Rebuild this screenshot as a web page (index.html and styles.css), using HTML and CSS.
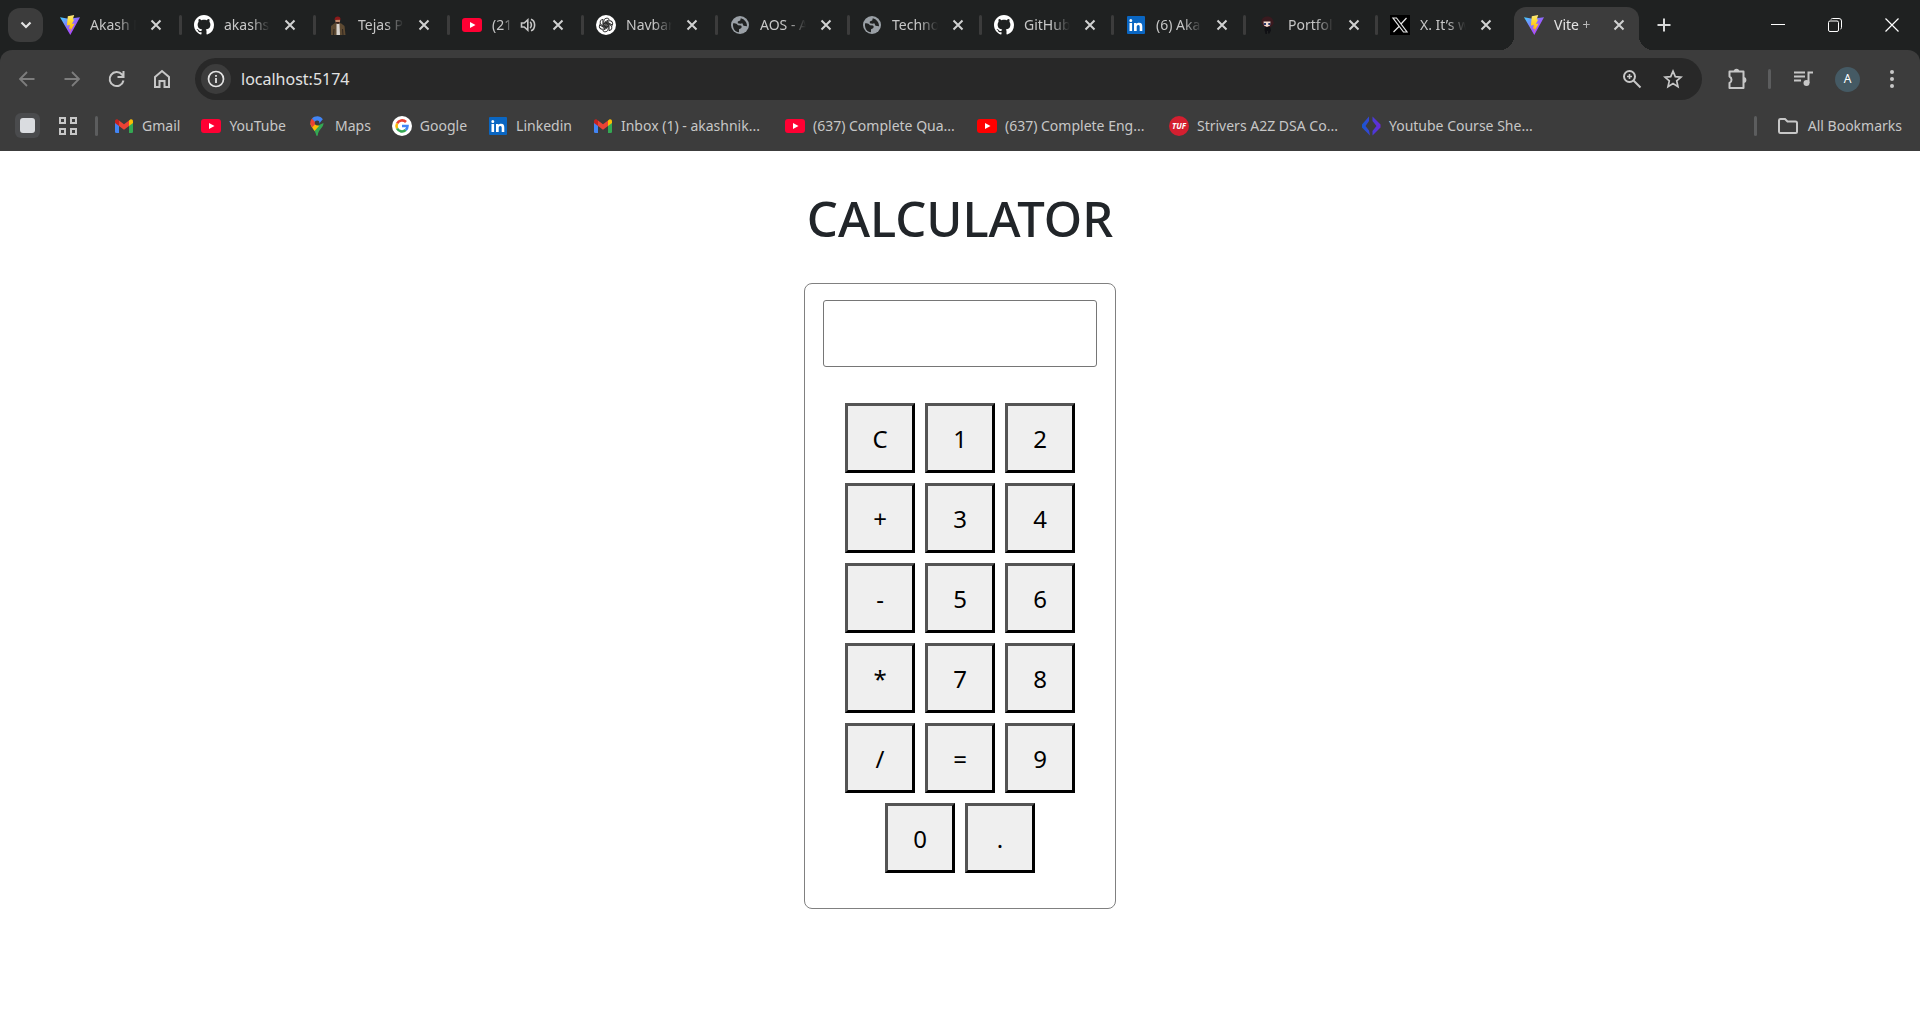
FILE: index.html
```html
<!DOCTYPE html>
<html lang="en">
<head>
<meta charset="utf-8">
<title>Vite + React</title>
<link rel="stylesheet" href="styles.css">
</head>
<body>
<svg class="defs" aria-hidden="true">
  <defs>
    <linearGradient id="vite-a" x1="0" y1="0" x2="1" y2="1"><stop offset="0" stop-color="#41d1ff"/><stop offset="0.55" stop-color="#9a5cff"/><stop offset="1" stop-color="#bd34fe"/></linearGradient>
    <linearGradient id="vite-b" x1="0" y1="0" x2="0" y2="1"><stop offset="0" stop-color="#ffea83"/><stop offset="0.3" stop-color="#ffdd35"/><stop offset="1" stop-color="#ffa800"/></linearGradient>
    <linearGradient id="course" x1="0" y1="0" x2="1" y2="0"><stop offset="0" stop-color="#1557d0"/><stop offset="1" stop-color="#6d28d9"/></linearGradient>
    <symbol id="vite" viewBox="0 0 20 20"><path fill="url(#vite-a)" d="M0 2.200l8.500 1.500L20 2.200 10.300 20z"/><path fill="url(#vite-b)" d="M14.200 0L7.800 1.300l-.9 9.200 3-.6-.9 4.200 2-.5-1.200 4 4.900-9.200-2.800.5L14.200 4.500h-1.500z"/></symbol>
    <symbol id="github" viewBox="0 0 16 16"><path fill="#fff" d="M8 0C3.580 0 0 3.580 0 8c0 3.540 2.290 6.530 5.470 7.590.4.070.55-.17.55-.38 0-.19-.01-.82-.01-1.490-2.010.37-2.530-.49-2.690-.94-.09-.23-.48-.94-.82-1.130-.28-.15-.68-.52-.01-.53.63-.01 1.080.58 1.230.82.72 1.210 1.870.87 2.330.66.07-.52.28-.87.51-1.070-1.780-.2-3.640-.89-3.640-3.950 0-.87.31-1.590.82-2.150-.08-.2-.36-1.020.08-2.120 0 0 .67-.21 2.200.82.64-.18 1.320-.27 2-.27s1.360.09 2 .27c1.530-1.040 2.200-.82 2.200-.82.44 1.100.16 1.920.08 2.120.51.56.82 1.270.82 2.150 0 3.070-1.870 3.750-3.650 3.950.29.25.54.73.54 1.480 0 1.070-.01 1.930-.01 2.200 0 .21.15.46.55.38A8.010 8.010 0 0 0 16 8c0-4.420-3.580-8-8-8z"/></symbol>
    <symbol id="youtube" viewBox="0 0 20 20"><rect y="3" width="20" height="14" rx="3" fill="#ff0033"/><path fill="#fff" d="M8 7l5.500 3L8 13z"/></symbol>
    <symbol id="globe" viewBox="0 0 20 20"><circle cx="10" cy="10" r="9" fill="#9aa0a6"/><path fill="#202222" d="M3 8.500c2.500-.5 4 .5 5 1.800l3 .2c1.200 1 .6 2.500-.4 3l-1.600.8v3C5 17 2.600 13.500 3 8.500zM10.800 3.200l-.6 2.300-2.400.9v1.800l2.700.6 1.800-.6 1.200 2.600 3.500.5c.2-4-2.500-7.200-6.200-8.100z"/></symbol>
    <symbol id="linkedin" viewBox="0 0 20 20"><rect x="1" y="1" width="18" height="18" rx="1" fill="#0a66c2"/><path fill="#fff" d="M3.500 8h2.600v8H3.500zM4.800 4a1.500 1.500 0 1 1 0 3 1.500 1.500 0 0 1 0-3zM8 8h2.500v1.100c.5-.8 1.400-1.300 2.600-1.300 2.600 0 3.200 1.600 3.200 3.900V16h-2.600v-4c0-1 0-2.100-1.400-2.100-1.300 0-1.600 1-1.600 2.100v4H8z"/></symbol>
    <symbol id="gmail" viewBox="0 0 20 20"><path fill="#4285f4" d="M1 6l4 3v8H2.300A1.300 1.300 0 0 1 1 15.700z"/><path fill="#34a853" d="M15 9l4-3v9.700a1.300 1.300 0 0 1-1.300 1.300H15z"/><path fill="#fbbc04" d="M15 4.500l1-.8c1.300-1 3-.2 3 1.500V7l-4 3z"/><path fill="#c5221f" d="M1 5.200c0-1.700 1.700-2.500 3-1.500l1 .8V10L1 7z"/><path fill="#ea4335" d="M5 4.500l5 3.800 5-3.800V10l-5 3.800L5 10z"/></symbol>
    <symbol id="tab-x" viewBox="0 0 12 12"><path d="M1.500 1.500l9 9M10.500 1.500l-9 9" stroke="#d0d1d1" stroke-width="2" fill="none"/></symbol>
  </defs>
</svg>

<header class="browser">
  <div class="strip">
    <button class="tab-search" aria-label="Search tabs"><svg width="12" height="8" viewBox="0 0 12 8"><path d="M1.500 1.500L6 6l4.500-4.500" fill="none" stroke="#e3e3e3" stroke-width="2.200"/></svg></button>
    <nav class="tabs" aria-label="Tabs">
      <div class="tab"><svg class="icon"><use href="#vite"/></svg><span class="title">Akash N</span><button class="close" aria-label="Close tab"><svg><use href="#tab-x"/></svg></button></div>
      <div class="tab"><svg class="icon"><use href="#github"/></svg><span class="title">akashsh</span><button class="close" aria-label="Close tab"><svg><use href="#tab-x"/></svg></button></div>
      <div class="tab"><svg class="icon" viewBox="0 0 20 20"><path fill="#5d4a32" d="M3 20V11l3.500-2.700h6.500L16.500 11l1 9z"/><path fill="#d9d5cf" d="M8.500 8.500h3L12 20H8.500z"/><path d="M5.500 20l.5-6M14.500 14l.5 6" stroke="#30271f"/><ellipse cx="9.700" cy="5.500" rx="2.400" ry="3" fill="#c08a6c"/><path fill="#8a1a1a" d="M6.500 5C6.500 2.500 8 1.500 9.700 1.500s2.900 1 2.900 3.200z"/><path fill="#352019" d="M7.800 7h3.900l-.7 1.800H8.600z"/></svg><span class="title">Tejas P</span><button class="close" aria-label="Close tab"><svg><use href="#tab-x"/></svg></button></div>
      <div class="tab"><svg class="icon"><use href="#youtube"/></svg><span class="title with-audio">(21</span><svg class="audio" width="16" height="16" viewBox="0 0 16 16" fill="none" stroke="#c7c7c7" stroke-width="1.600"><path d="M1.500 6v4h2.700l3.600 3.200V2.800L4.200 6zM10 5c1.900 1 1.900 5 0 6M11 2.200c4.800 1.600 4.800 10 0 11.600"/></svg><button class="close" aria-label="Close tab"><svg><use href="#tab-x"/></svg></button></div>
      <div class="tab"><svg class="icon" viewBox="0 0 20 20"><circle cx="10" cy="10" r="10" fill="#fff"/><g fill="none" stroke="#222" stroke-width="0.900"><path id="petal" d="M7.800 11.800V6a3 3 0 0 1 5.500-1.500L9 7v3.500"/><use href="#petal" transform="rotate(60 10 10)"/><use href="#petal" transform="rotate(120 10 10)"/><use href="#petal" transform="rotate(180 10 10)"/><use href="#petal" transform="rotate(240 10 10)"/><use href="#petal" transform="rotate(300 10 10)"/></g></svg><span class="title">Navbar</span><button class="close" aria-label="Close tab"><svg><use href="#tab-x"/></svg></button></div>
      <div class="tab"><svg class="icon"><use href="#globe"/></svg><span class="title">AOS - A</span><button class="close" aria-label="Close tab"><svg><use href="#tab-x"/></svg></button></div>
      <div class="tab"><svg class="icon"><use href="#globe"/></svg><span class="title">Techno</span><button class="close" aria-label="Close tab"><svg><use href="#tab-x"/></svg></button></div>
      <div class="tab"><svg class="icon"><use href="#github"/></svg><span class="title">GitHub</span><button class="close" aria-label="Close tab"><svg><use href="#tab-x"/></svg></button></div>
      <div class="tab"><svg class="icon"><use href="#linkedin"/></svg><span class="title">(6) Aka</span><button class="close" aria-label="Close tab"><svg><use href="#tab-x"/></svg></button></div>
      <div class="tab"><svg class="icon" viewBox="0 0 20 20"><path fill="#3a1a1f" d="M3.500 8C3 3 6 1.500 9.500 1.500S16 4 15.500 9L13 12H6z"/><path fill="#f3d9cf" d="M5.500 6.500h7l-.5 4-3 1.500-3-1.500z"/><path fill="#2b3a6b" d="M6 8h2v2H6zM10.300 8h2v2h-2z"/><path fill="#101014" d="M7 12h5l1 3.500-1.500 3H10V16H9v3H7.500L6.500 15z"/></svg><span class="title">Portfoli</span><button class="close" aria-label="Close tab"><svg><use href="#tab-x"/></svg></button></div>
      <div class="tab last"><svg class="icon" viewBox="0 0 20 20"><path d="M0 0h20v20H0z"/><path d="M3 3h3.500L17 17h-3.500zM16.500 3L11 9M9 11.500L3.500 17" fill="none" stroke="#e6e6e6" stroke-width="1.200"/></svg><span class="title">X. It’s w</span><button class="close" aria-label="Close tab"><svg><use href="#tab-x"/></svg></button></div>
      <div class="tab active"><svg class="icon"><use href="#vite"/></svg><span class="title">Vite +</span><button class="close" aria-label="Close tab"><svg><use href="#tab-x"/></svg></button></div>
    </nav>
    <button class="new-tab" aria-label="New tab"><svg width="14" height="14" viewBox="0 0 14 14"><path d="M7 0.500v13M.5 7h13" stroke="#d8d9d9" stroke-width="2"/></svg></button>
    <div class="window-controls">
      <button aria-label="Minimize"><svg width="14" height="14" viewBox="0 0 14 14"><path d="M0 6.500h14" stroke="#fff"/></svg></button>
      <button aria-label="Restore"><svg width="14" height="14" viewBox="0 0 14 14" fill="none" stroke="#fff"><rect x=".5" y="3" width="10" height="10.500" rx="1.500"/><path d="M3 1.500Q3.300.5 4.500.5H11q2.500 0 2.500 2.500v6.500q0 1.300-1 1.500"/></svg></button>
      <button aria-label="Close"><svg width="14" height="14" viewBox="0 0 14 14"><path d="M.5.5l13 13M13.500.5l-13 13" stroke="#fff" stroke-width="1.200"/></svg></button>
    </div>
  </div>

  <div class="toolbar">
    <div class="nav-buttons">
      <button aria-label="Back"><svg width="20" height="20" viewBox="0 0 20 20" fill="none" stroke="#7d7d7d" stroke-width="1.800"><path d="M17.500 10H3.500M10 3l-7 7 7 7"/></svg></button>
      <button aria-label="Forward"><svg width="20" height="20" viewBox="0 0 20 20" fill="none" stroke="#7d7d7d" stroke-width="1.800"><path d="M2.500 10h14M10 3l7 7-7 7"/></svg></button>
      <button aria-label="Reload"><svg width="20" height="20" viewBox="0 0 20 20" fill="none" stroke="#c7c7c7" stroke-width="2"><path d="M16.500 11.500A7 7 0 1 1 15 5.500L16 7M16.500 2v6h-6"/></svg></button>
      <button aria-label="Home"><svg width="20" height="20" viewBox="0 0 20 20" fill="none" stroke="#c7c7c7" stroke-width="2"><path d="M3 8l7-6 7 6v10h-4.500v-6h-5v6H3z"/></svg></button>
    </div>
    <div class="omnibox">
      <button class="site-info" aria-label="View site information"><svg width="18" height="18" viewBox="0 0 18 18"><circle cx="9" cy="9" r="7.500" fill="none" stroke="#e3e3e3" stroke-width="1.700"/><path d="M9 8v5M9 5v1.800" stroke="#e3e3e3" stroke-width="1.800"/></svg></button>
      <input class="url" type="text" value="localhost:5174" aria-label="Address">
      <button aria-label="Zoom"><svg width="20" height="20" viewBox="0 0 20 20" fill="none" stroke="#c7c7c7" stroke-width="2"><circle cx="7.500" cy="7.500" r="5.500"/><path d="M11.500 11.500l7 7"/><path d="M7.500 5v5M5 7.500h5" stroke-width="1.600"/></svg></button>
      <button aria-label="Bookmark this tab"><svg width="20" height="20" viewBox="0 0 20 20" fill="none" stroke="#c7c7c7" stroke-width="1.700"><path d="M10 2.200l2.300 5.400 5.800.5-4.400 3.800 1.300 5.800-5-3.100-5 3.100 1.300-5.800L1.900 8.100l5.800-.5z"/></svg></button>
    </div>
    <div class="actions">
      <button aria-label="Extensions"><svg width="24" height="24" viewBox="0 0 24 24"><path d="M4.500 4.500h14v16.500h-14v-5q2-.8 2-3.200t-2-3.300z" fill="none" stroke="#c7c7c7" stroke-width="2" stroke-linejoin="round"/><path d="M8.800 4.500a2.700 2.700 0 0 1 5.400 0zM18.500 10a2.900 2.900 0 0 1 0 5.800z" fill="#c7c7c7"/></svg></button>
      <span class="divider"></span>
      <button aria-label="Media control"><svg width="20" height="20" viewBox="0 0 20 20" fill="none" stroke="#c7c7c7" stroke-width="2"><path d="M1 3.500h11M1 7.500h11M1 11.500h7M15.500 14V3.500H20"/><circle cx="13.500" cy="14" r="3" fill="#c7c7c7" stroke="none"/></svg></button>
      <button class="avatar" aria-label="Profile">A</button>
      <button aria-label="Menu"><svg width="20" height="20" viewBox="0 0 20 20" fill="#c7c7c7"><circle cx="10" cy="3" r="2"/><circle cx="10" cy="10" r="2"/><circle cx="10" cy="17" r="2"/></svg></button>
    </div>
  </div>

  <div class="bookmarks">
    <button class="group" aria-label="Tab group"><span></span></button>
    <button class="apps" aria-label="Apps"><svg width="20" height="20" viewBox="0 0 20 20" fill="none" stroke="#c7c7c7" stroke-width="2"><path d="M2 2h5v5H2zM13 2h5v5h-5zM2 13h5v5H2zM13 13h5v5h-5z"/></svg></button>
    <span class="divider"></span>
    <nav class="links" aria-label="Bookmarks">
      <a href="#"><svg class="icon"><use href="#gmail"/></svg><span>Gmail</span></a>
      <a href="#"><svg class="icon"><use href="#youtube"/></svg><span>YouTube</span></a>
      <a href="#"><svg class="icon" viewBox="0 0 20 20"><path fill="#34a853" d="M16.500 7c0 5-5.200 6-5.700 12.300q-.8 1.200-1.600 0C8.500 16 7 14 5.500 12z"/><path fill="#fbbc04" d="M5.500 12C4.500 10.500 3.500 9 3.400 7.500L9 8l3 2-4.500 5z"/><path fill="#ea4335" d="M3.300 7.500c-.2-2 .6-3.600 1.700-5L10 6.500l-5 5z"/><path fill="#4285f4" d="M5 2.500C7.500-.5 13.500-1 15.800 3.200L11 9 8.500 6.500z"/><circle cx="10.100" cy="7" r="2.400" fill="#3c3c3c"/></svg><span>Maps</span></a>
      <a href="#"><svg class="icon" viewBox="0 0 20 20"><circle cx="10" cy="10" r="10" fill="#fff"/><g fill="none" stroke-width="2.600"><path stroke="#ea4335" d="M5.100 7.500A5.500 5.500 0 0 1 14 6"/><path stroke="#fbbc05" d="M5.100 12.500a5.500 5.500 0 0 1 0-5"/><path stroke="#34a853" d="M13.700 14a5.500 5.500 0 0 1-8.600-1.500"/><path stroke="#4285f4" d="M10 10h5.500a5.500 5.500 0 0 1-1.800 4"/></g></svg><span>Google</span></a>
      <a href="#"><svg class="icon"><use href="#linkedin"/></svg><span>Linkedin</span></a>
      <a href="#"><svg class="icon"><use href="#gmail"/></svg><span class="long">Inbox (1) - akashnik...</span></a>
      <a href="#"><svg class="icon"><use href="#youtube"/></svg><span class="long">(637) Complete Qua...</span></a>
      <a href="#"><svg class="icon" viewBox="0 0 20 20"><rect y="3" width="20" height="14" rx="3" fill="#f00"/><path fill="#fff" d="M8 7l5.500 3L8 13z"/></svg><span class="long">(637) Complete Eng...</span></a>
      <a href="#"><svg class="icon" viewBox="0 0 20 20"><circle cx="10" cy="10" r="10" fill="#d41f30"/><text x="10" y="13" class="tuf">TUF</text></svg><span class="long">Strivers A2Z DSA Co...</span></a>
      <a href="#"><svg class="icon" viewBox="0 0 20 20" fill="url(#course)"><path d="M8 .5v4.500L4.500 10 8 14.500 9 19.500 1 11.500v-3zM11.500.5l8 8v3l-8 8v-4.500l4-5-4-5z"/></svg><span class="long">Youtube Course She...</span></a>
    </nav>
    <span class="divider"></span>
    <button class="all"><svg width="22" height="20" viewBox="0 0 22 20" fill="none" stroke="#c7c7c7" stroke-width="2"><path d="M2 4.500Q2 3 3.500 3H8l2.500 2.500h8Q20 5.500 20 7v8.500q0 1.500-1.500 1.500h-15Q2 17 2 15.500z"/></svg>All Bookmarks</button>
  </div>
</header>

<main class="page">
  <h1>CALCULATOR</h1>
  <section class="calculator" aria-label="Calculator">
    <input class="display" type="text" aria-label="Display">
    <div class="keys">
      <button>C</button><button>1</button><button>2</button>
      <button>+</button><button>3</button><button>4</button>
      <button>-</button><button>5</button><button>6</button>
      <button>*</button><button>7</button><button>8</button>
      <button>/</button><button>=</button><button>9</button>
      <button>0</button><button>.</button>
    </div>
  </section>
</main>
</body>
</html>
```
FILE: styles.css
```css
* {
  box-sizing: border-box;
}

body {
  margin: 0;
  background: #fff;
  font-family: "Noto Sans", "Open Sans", sans-serif;
  color: #212529;
}

button {
  padding: 0;
  border: 0;
  background: none;
  font: inherit;
  color: inherit;
}

svg {
  display: block;
  flex: none;
}

.defs {
  position: absolute;
  width: 0;
  height: 0;
}

.icon {
  width: 20px;
  height: 20px;
}

/* Browser frame */
.browser {
  background: #1f2121;
  color: #c7c7c7;
  font-size: 14px;
  line-height: 20px;
}

.strip {
  display: flex;
  align-items: stretch;
  height: 50px;
  padding-left: 8px;
}

.tab-search {
  display: flex;
  align-items: center;
  justify-content: center;
  width: 35px;
  height: 34px;
  margin-top: 8px;
  border-radius: 12px;
  background: #3c3c3c;
}

.tabs {
  display: flex;
  padding-left: 4px;
}

.tab {
  position: relative;
  display: flex;
  align-items: center;
  width: 134px;
  padding: 0 17px 0 13px;
}

.tab:nth-child(n + 6) {
  width: 132px;
  padding-right: 15px;
}

.tab::after {
  content: "";
  position: absolute;
  right: -1px;
  top: 15px;
  width: 3px;
  height: 20px;
  border-radius: 2px;
  background: #3c3c3c;
}

.tab.last::after {
  display: none;
}

.title {
  width: 46px;
  margin-left: 10px;
  overflow: hidden;
  white-space: nowrap;
  -webkit-mask-image: linear-gradient(90deg, #000 60%, transparent);
  mask-image: linear-gradient(90deg, #000 60%, transparent);
}

.title.with-audio {
  width: 20px;
}

.audio {
  margin-left: 8px;
}

.close {
  display: flex;
  align-items: center;
  justify-content: center;
  width: 16px;
  height: 20px;
  margin-left: auto;
}

.close svg {
  width: 12px;
  height: 12px;
}

.tab.active {
  width: 125px;
  height: 43px;
  margin: 7px 0 0 5px;
  padding: 0 12px 7px 10px;
  border-radius: 12px 12px 0 0;
  background: #3c3c3c;
  color: #e3e3e3;
}

.tab.active::before,
.tab.active::after {
  content: "";
  position: absolute;
  top: auto;
  bottom: 0;
  width: 14px;
  height: 14px;
  border-radius: 0;
}

.tab.active::before {
  left: -14px;
  background: radial-gradient(circle at 0 0, #1f2121 14px, #3c3c3c 14px);
}

.tab.active::after {
  right: -14px;
  background: radial-gradient(circle at 100% 0, #1f2121 14px, #3c3c3c 14px);
}

.new-tab {
  display: flex;
  align-items: center;
  justify-content: center;
  width: 50px;
}

.window-controls {
  display: flex;
  margin-left: auto;
}

.window-controls button {
  display: flex;
  align-items: center;
  justify-content: center;
  width: 57px;
}

.toolbar {
  display: flex;
  align-items: center;
  height: 58px;
  padding: 0 18px 0 14px;
  border-radius: 12px 12px 0 0;
  background: #3c3c3c;
}

.nav-buttons {
  display: flex;
  gap: 25px;
  padding: 0 23px 0 3px;
}

.omnibox {
  display: flex;
  flex: 1;
  align-items: center;
  gap: 21px;
  height: 42px;
  padding: 0 19px 0 6px;
  border-radius: 21px;
  background: #282828;
}

.site-info {
  display: flex;
  align-items: center;
  justify-content: center;
  width: 30px;
  height: 30px;
  border-radius: 50%;
  background: #3c3c3c;
}

.url {
  flex: 1;
  min-width: 0;
  margin-left: -11px;
  padding: 0;
  border: 0;
  outline: 0;
  background: none;
  font: 16px/24px "Noto Sans", "Open Sans", sans-serif;
  color: #e3e3e3;
}

.actions {
  display: flex;
  align-items: center;
  padding-left: 23px;
}

.divider {
  flex: none;
  width: 3px;
  height: 20px;
  border-radius: 2px;
  background: #5c5d5e;
}

.actions .divider {
  margin: 0 22px 0 19px;
}

.avatar {
  width: 25px;
  height: 25px;
  margin: 0 22px;
  border-radius: 50%;
  background: #455a64;
  color: #fff;
  font-size: 12px;
}

.bookmarks {
  display: flex;
  align-items: center;
  height: 43px;
  padding: 0 18px 8px 15px;
  background: #3c3c3c;
}

.group {
  display: flex;
  align-items: center;
  justify-content: center;
  width: 25px;
  height: 25px;
  border-radius: 6px;
  background: #4a4b4d;
}

.group span {
  width: 15px;
  height: 15px;
  border-radius: 3px;
  background: #dadce0;
}

.apps {
  margin: 0 17px 0 18px;
}

.links {
  display: flex;
  flex: 1;
  gap: 21px;
  padding-left: 16px;
}

.links a {
  display: flex;
  gap: 8px;
  color: inherit;
  text-decoration: none;
  white-space: nowrap;
}

.links .long {
  width: 143px;
}

.tuf {
  fill: #fff;
  font: italic bold 8px "Open Sans", sans-serif;
  text-anchor: middle;
}

.all {
  display: flex;
  gap: 9px;
  padding-left: 20px;
}

/* Calculator page */
.page {
  display: flex;
  flex-direction: column;
  align-items: center;
  padding: 37px 20px;
}

h1 {
  margin: 0;
  font-size: 49px;
  font-weight: 500;
  line-height: 60px;
}

.calculator {
  width: 312px;
  margin-top: 35px;
  padding: 16px 18px 30px;
  border: 1px solid #808080;
  border-radius: 8px;
}

.display {
  display: block;
  width: 100%;
  height: 67px;
  padding: 0 10px;
  border: 1px solid #767676;
  border-radius: 3px;
  font-size: 24px;
}

.keys {
  display: flex;
  flex-wrap: wrap;
  justify-content: center;
  gap: 10px;
  padding: 36px 20px 5px;
}

.keys button {
  width: 70px;
  height: 70px;
  border: 3px outset #000;
  background: #efefef;
  font-size: 24px;
  color: #000;
}
```
